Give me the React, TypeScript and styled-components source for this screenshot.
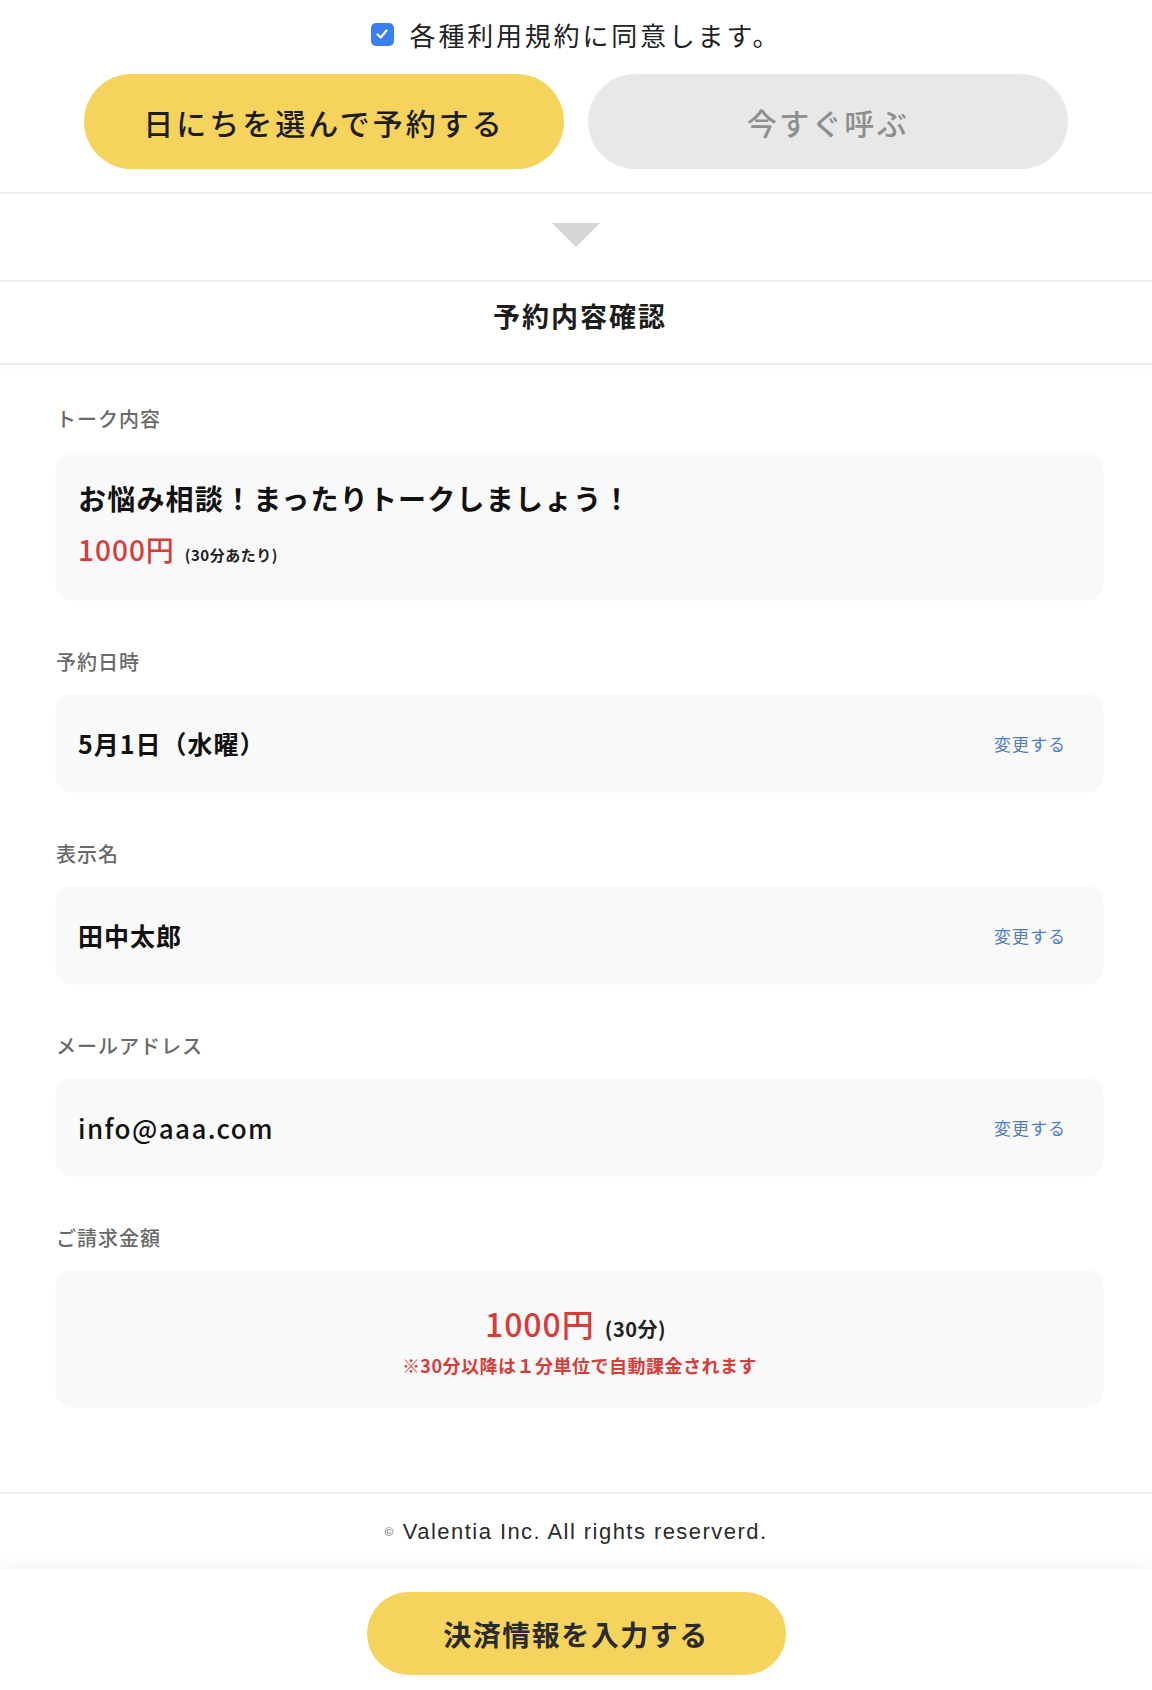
import React, { FC } from 'react';
import styled, { createGlobalStyle } from 'styled-components';

const GlobalStyle = createGlobalStyle`
  html, body {
    margin: 0;
    padding: 0;
    background: #ffffff;
  }
  body {
    font-family: "Noto Sans CJK JP", "Noto Sans", sans-serif;
    color: #222;
  }
`;

const Page = styled.div`
  width: 1152px;
  background: #fff;
`;

const TopArea = styled.div`
  padding: 14px 84px 23px;
  border-bottom: 2px solid #f0f0f0;
`;

const AgreeRow = styled.label`
  display: flex;
  align-items: center;
  justify-content: center;
  gap: 16px;
  height: 40px;
  font-size: 26px;
  letter-spacing: 2.8px;
  color: #222;
`;

const CheckBox = styled.span`
  display: inline-flex;
  align-items: center;
  justify-content: center;
  width: 23px;
  height: 23px;
  border-radius: 5px;
  background: #3a7ff0;
`;

const ButtonRow = styled.div`
  display: grid;
  grid-template-columns: 1fr 1fr;
  gap: 24px;
  margin-top: 20px;
`;

const PillButton = styled.button<{ $active?: boolean }>`
  height: 95px;
  border: none;
  border-radius: 48px;
  font-family: inherit;
  font-size: 30px;
  font-weight: 500;
  letter-spacing: ${p => (p.$active ? 3 : 2.5)}px;
  background: ${p => (p.$active ? '#f5d35c' : '#e8e8e8')};
  color: ${p => (p.$active ? '#1d1d1d' : '#8e8e8e')};
`;

const ArrowArea = styled.div`
  height: 86px;
  display: flex;
  align-items: center;
  justify-content: center;
  border-bottom: 2px solid #f0f0f0;
`;

const ArrowDown = styled.div`
  width: 0;
  height: 0;
  border-left: 24px solid transparent;
  border-right: 24px solid transparent;
  border-top: 24px solid #d5d5d5;
  margin-top: -4px;
`;

const TitleBar = styled.div`
  height: 83px;
  display: flex;
  align-items: center;
  justify-content: center;
  padding-bottom: 15px;
  box-sizing: border-box;
  border-bottom: 2px solid #ebebeb;
  box-shadow: 0 3px 3px rgba(0, 0, 0, 0.025);
`;

const Title = styled.h2`
  margin: 0 0 0 8px;
  font-size: 27px;
  font-weight: 700;
  letter-spacing: 2px;
  color: #1d1d1d;
`;

const Content = styled.div`
  padding: 39px 49px 85px 56px;
  display: flex;
  flex-direction: column;
  gap: 47px;
  border-bottom: 2px solid #ececec;
`;

const Field = styled.div`
  display: flex;
  flex-direction: column;
  gap: 17px;
`;

const FieldLabel = styled.div`
  font-size: 20px;
  line-height: 30px;
  font-weight: 500;
  letter-spacing: 1px;
  color: #6a6a6a;
`;

const Card = styled.div`
  background: #f9f9f9;
  border-radius: 16px;
  box-shadow: 0 0 2px rgba(0, 0, 0, 0.03);
`;

const TalkCard = styled(Card)`
  margin-top: 2px;
  padding: 25px 22px 26px;
`;

const TalkTitle = styled.div`
  font-size: 28px;
  line-height: 40px;
  font-weight: 700;
  letter-spacing: 1.2px;
  color: #111;
`;

const PriceLine = styled.div`
  margin-top: 12px;
  display: flex;
  align-items: baseline;
  gap: 10px;
  line-height: 38px;
`;

const Price = styled.span<{ $size: number }>`
  font-size: ${p => p.$size}px;
  font-weight: 500;
  letter-spacing: 1px;
  color: #d63d3a;
`;

const PriceNote = styled.span<{ $size: number }>`
  font-size: ${p => p.$size}px;
  font-weight: 700;
  letter-spacing: 0.5px;
  color: #222;
`;

const ValueCard = styled(Card)`
  height: 98px;
  display: flex;
  align-items: center;
  justify-content: space-between;
  padding: 0 37px 0 22px;
`;

const Value = styled.div<{ $latin?: boolean }>`
  font-size: ${p => (p.$latin ? 26 : 25)}px;
  font-weight: ${p => (p.$latin ? 500 : 700)};
  letter-spacing: ${p => (p.$latin ? 1.4 : 1)}px;
  color: #111;
`;

const ChangeLink = styled.a`
  font-size: 17px;
  letter-spacing: 1px;
  color: #4a7dcc;
  text-decoration: none;
`;

const TotalCard = styled(Card)`
  padding: 33px 22px 30px;
  display: flex;
  flex-direction: column;
  align-items: center;
`;

const TotalLine = styled.div`
  display: flex;
  align-items: baseline;
  gap: 10px;
  line-height: 40px;
  margin-right: 8px;
`;

const TotalNote = styled.div`
  margin-top: 4px;
  line-height: 24px;
  font-size: 18px;
  font-weight: 700;
  letter-spacing: 0.5px;
  color: #d63d3a;
`;

const Footer = styled.footer`
  height: 76px;
  display: flex;
  align-items: center;
  justify-content: center;
  font-family: "Liberation Sans", Arial, sans-serif;
  font-size: 22px;
  letter-spacing: 1.45px;
  color: #2a2a2a;
`;

const Copy = styled.span`
  font-size: 12px;
  font-weight: 700;
  color: #888;
  margin-right: 8px;
`;

const BottomBar = styled.div`
  height: 122px;
  display: flex;
  justify-content: center;
  padding-top: 22px;
  box-sizing: border-box;
  box-shadow: 0 -8px 12px rgba(0, 0, 0, 0.035);
`;

const SubmitButton = styled.button`
  width: 419px;
  height: 83px;
  border: none;
  border-radius: 42px;
  background: #f5d35c;
  font-family: inherit;
  font-size: 28px;
  font-weight: 700;
  letter-spacing: 1.5px;
  color: #2b2b2b;
`;

interface EditableField {
  label: string;
  value: string;
  latin?: boolean;
}

const editableFields: EditableField[] = [
  { label: '予約日時', value: '5月1日（水曜）' },
  { label: '表示名', value: '田中太郎' },
  { label: 'メールアドレス', value: 'info@aaa.com', latin: true },
];

const App: FC = () => {
  return (
    <Page>
      <GlobalStyle />
      <TopArea>
        <AgreeRow>
          <CheckBox>
            <svg width="14" height="14" viewBox="0 0 14 14">
              <path d="M2.5 7.5 L5.7 10.5 L11.5 3.5" fill="none" stroke="#fff" strokeWidth="2.2" strokeLinecap="round" strokeLinejoin="round" />
            </svg>
          </CheckBox>
          各種利用規約に同意します。
        </AgreeRow>
        <ButtonRow>
          <PillButton $active>日にちを選んで予約する</PillButton>
          <PillButton>今すぐ呼ぶ</PillButton>
        </ButtonRow>
      </TopArea>

      <ArrowArea>
        <ArrowDown />
      </ArrowArea>

      <TitleBar>
        <Title>予約内容確認</Title>
      </TitleBar>

      <Content>
        <Field>
          <FieldLabel>トーク内容</FieldLabel>
          <TalkCard>
            <TalkTitle>お悩み相談！まったりトークしましょう！</TalkTitle>
            <PriceLine>
              <Price $size={28}>1000円</Price>
              <PriceNote $size={15}>(30分あたり)</PriceNote>
            </PriceLine>
          </TalkCard>
        </Field>

        {editableFields.map(field => (
          <Field key={field.label}>
            <FieldLabel>{field.label}</FieldLabel>
            <ValueCard>
              <Value $latin={field.latin}>{field.value}</Value>
              <ChangeLink href="#">変更する</ChangeLink>
            </ValueCard>
          </Field>
        ))}

        <Field>
          <FieldLabel>ご請求金額</FieldLabel>
          <TotalCard>
            <TotalLine>
              <Price $size={32}>1000円</Price>
              <PriceNote $size={20}>(30分)</PriceNote>
            </TotalLine>
            <TotalNote>※30分以降は１分単位で自動課金されます</TotalNote>
          </TotalCard>
        </Field>
      </Content>

      <Footer>
        <Copy>©</Copy>Valentia Inc. All rights reserverd.
      </Footer>

      <BottomBar>
        <SubmitButton>決済情報を入力する</SubmitButton>
      </BottomBar>
    </Page>
  );
};

export default App;
